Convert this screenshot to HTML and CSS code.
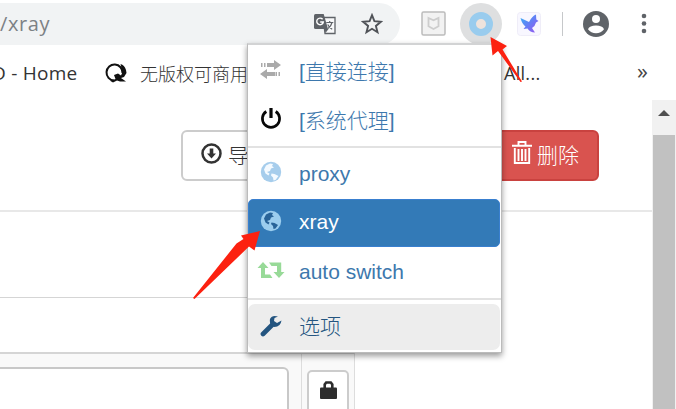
FILE: index.html
```html
<!DOCTYPE html>
<html lang="zh-CN">
<head>
<meta charset="utf-8">
<title>xray</title>
<link rel="stylesheet" href="styles.css">
</head>
<body>
<header class="toolbar">
  <div class="address">
    <span class="url">/xray</span>
    <svg class="translate" width="22" height="22" viewBox="0 0 22 22"><path d="M9 4.500h12v16H11z" fill="#f8f9fa" stroke="#5f6368" stroke-width="1.300"/><path d="M1.500 1h8.200l4.300 15H1.500Q0 16 0 14.500V2.500Q0 1 1.500 1z" fill="#5f6368"/><path d="M10.500 16h4l-3 4z" fill="#5f6368"/><path d="M8.600 6.300A3.300 3.300 0 1 0 9.300 9H6.200" fill="none" stroke="#fff" stroke-width="1.400"/><path d="M12.300 9.500h7M15.700 8v1.500M18 9.500q-1 4-4 6M13.700 11.500q1.500 3 4.500 4.700" fill="none" stroke="#5f6368" stroke-width="1.200"/></svg>
    <svg class="star" width="22" height="22" viewBox="0 0 22 22"><path d="M11 2.200l2.400 6 6.500.5-5 4.200 1.600 6.300-5.500-3.400-5.500 3.400 1.600-6.300-5-4.200 6.500-.5z" fill="none" stroke="#505358" stroke-width="1.900"/></svg>
  </div>
  <svg class="shield" width="25" height="25" viewBox="0 0 25 25"><rect x="1" y="1" width="23" height="23" rx="1.500" fill="#f2f2f2" stroke="#bcbcbc" stroke-width="1.500"/><path d="M7.500 7l5 2.300 5-2.300v8.200l-5 2.800-5-2.800z" fill="none" stroke="#cdcdcd" stroke-width="1.800"/></svg>
  <div class="omega"><span class="ring"></span></div>
  <svg class="bird" width="24" height="24" viewBox="0 0 24 24"><defs><linearGradient id="wing" x1="0" y1="0" x2="1" y2="1"><stop offset="0" stop-color="#35b5f5"/><stop offset=".5" stop-color="#667df5"/><stop offset="1" stop-color="#9a55ee"/></linearGradient></defs><rect x=".5" y=".5" width="23" height="23" rx="3" fill="#f8f7ff" stroke="#efedf8"/><path d="M3.500 6l8.500 4q3-6 7-7.500l.3 5 2.200 1.500-2.500 1.500q-1 4-4 5.500l3 4.500q-5 0-7.500-4l-4 .5 2-2.500Q5 12 3.500 6z" fill="url(#wing)"/></svg>
  <span class="separator"></span>
  <svg class="avatar" width="26" height="26" viewBox="0 0 26 26"><circle cx="13" cy="13" r="13" fill="#5f6368"/><circle cx="13" cy="8" r="4" fill="#fff"/><path d="M5 18.200q1.500-3.700 8-3.700t8 3.700q-3 4-8 4t-8-4z" fill="#fff"/></svg>
  <svg class="more" width="6" height="22" viewBox="0 0 6 22"><g fill="#5f6368"><circle cx="3" cy="3" r="2.300"/><circle cx="3" cy="10.500" r="2.300"/><circle cx="3" cy="18" r="2.300"/></g></svg>
</header>
<nav class="bookmarks">
  <span class="home">D - Home</span>
  <svg class="quark" width="24" height="22" viewBox="0 0 24 22"><path d="M10 18.500A8 8 0 1 1 18.500 11" fill="none" stroke="#111" stroke-width="2"/><path d="M16.500 2q4 1 5.500 6l.5 3-2.500 4-3 1 5 3.500h-6l-3-1-4 2-2.500-1.500 5-2-1.500-4 4-1.500 3 2 1.500-3.500z" fill="#111"/></svg>
  <span class="free">无版权可商用</span>
  <span class="all">All...</span>
  <span class="overflow">»</span>
</nav>
<div class="viewport">
  <main>
    <div class="actions">
      <button class="btn export"><svg width="21" height="21" viewBox="0 0 21 21"><circle cx="10.500" cy="10.500" r="9" fill="none" stroke="#333" stroke-width="2.500"/><path d="M8.700 5.500h3.600v5H15l-4.500 5-4.500-5h2.700z" fill="#333"/></svg><span>导出</span></button>
      <button class="btn danger"><svg width="20" height="23" viewBox="0 0 20 23"><path d="M6.500 4V1h7v3M0 4.700h20M2.800 7v15h14.400V7M6.500 8v12M10 8v12M13.500 8v12" fill="none" stroke="#fff" stroke-width="1.900"/></svg><span>删除</span></button>
    </div>
    <div class="intro"></div>
    <div class="rules">
      <div class="rules-head"></div>
      <div class="rules-row">
        <div class="cell wide"><div class="field"></div></div>
        <div class="cell narrow"><div class="lock"><svg width="17" height="18" viewBox="0 0 17 18"><path d="M4.700 8V3.500L6.200 1.500h4.600l1.500 2V8" fill="none" stroke="#2d2d2d" stroke-width="2.600"/><rect y="6.500" width="17" height="11.500" rx="1" fill="#2d2d2d"/></svg></div></div>
      </div>
    </div>
  </main>
  <aside class="scrollbar"><div class="up"></div><div class="thumb"></div></aside>
</div>
<div class="popup">
  <div class="item"><svg width="24" height="22" viewBox="0 0 24 22"><g fill="#aaa"><path d="M2 4h1.500v4H2zM5 4h1.500v4H5zM8 4h7V1l7 5-7 5V8H8zM21 13h-1.500v4H21zM18 13h-1.500v4H18zM16 13H8v-3l-7 5 7 5v-3h8z"/></g></svg><span>[直接连接]</span></div>
  <div class="item"><svg width="24" height="22" viewBox="0 0 24 22"><path d="M7.300 3.500a8.600 8.600 0 1 0 9.400 0" fill="none" stroke="#080808" stroke-width="2.700"/><path d="M12 0v10" stroke="#080808" stroke-width="3.200"/></svg><span>[系统代理]</span></div>
  <hr>
  <div class="item"><svg width="24" height="22" viewBox="0 0 24 22"><circle cx="12" cy="11" r="10.200" fill="#a6cdec"/><path d="M7 4.500l4-2 3 .5-1 2 2 1.500-3 1-1 2.500-3 1 2.500 1.500-1 2-3-2-1.500-4zM12.500 12.500l3 .5 4 2-3 4-2 .5-.5-3-2-2z" fill="#f4faff"/></svg><span>proxy</span></div>
  <div class="item active"><svg width="24" height="22" viewBox="0 0 24 22"><circle cx="12" cy="11" r="10.200" fill="#9bcdee"/><path d="M7 4.500l4-2 3 .5-1 2 2 1.500-3 1-1 2.500-3 1 2.500 1.500-1 2-3-2-1.500-4zM12.500 12.500l3 .5 3.500 2-2.500 3.500-2 .5-.5-3-2-2z" fill="#286398"/></svg><span>xray</span></div>
  <div class="item"><svg width="28" height="20" viewBox="0 0 28 20"><path d="M6 2l5.500 6H8v6.500h5l2.500 3.500H4V8H.5zM12 2.500h12.200V12h3.300L22 18l-5.500-6H20V6h-5.500z" fill="#98da98"/></svg><span>auto switch</span></div>
  <hr class="last">
  <div class="item options"><svg width="24" height="22" viewBox="0 0 24 22"><path d="M4 19l9.500-9.500" stroke="#245580" stroke-width="4.700" stroke-linecap="round"/><path d="M19 1.500q-6-2-8 2.500-1 7 4.500 8 6 0 7-6.500l-4.500 2.500-3-2 .5-3z" fill="#245580"/></svg><span>选项</span></div>
</div>
<svg class="arrows" width="676" height="409" viewBox="0 0 676 409"><g fill="#fc2110"><path d="M490.500 37L507 46l-4.500 3.500L522 81.500l-1.500.5-22.500-31-5.500 4.500z"/><path d="M260 231l-5.500 19.500-5.500-4L194.500 299l-1.500-1 43.500-54.500 7-4.500-2.500-3.500z"/></g></svg>
</body>
</html>
```
FILE: styles.css
```css
* { box-sizing: border-box; }
body {
  margin: 0;
  width: 676px;
  height: 409px;
  overflow: hidden;
  position: relative;
  background: #fff;
  color: #333;
  font-family: "Open Sans", "Noto Sans CJK SC", sans-serif;
}
svg { display: block; flex: none; }
.toolbar { display: flex; align-items: center; height: 48px; padding-bottom: 1px; }
.address {
  display: flex;
  align-items: center;
  width: 400px;
  height: 42px;
  background: #f1f3f4;
  border-radius: 0 21px 21px 0;
}
.url { width: 314px; color: #7c8185; font-size: 20px; line-height: 28px; letter-spacing: .6px; }
.star { margin-left: 25px; }
.shield { margin-left: 21px; }
.omega {
  display: flex;
  align-items: center;
  justify-content: center;
  width: 42px;
  height: 42px;
  margin-left: 14px;
  border-radius: 50%;
  background: #dedfe0;
}
.ring { width: 24px; height: 24px; border: 7px solid #99ccee; border-radius: 50%; background: #eee3dc; }
.bird { margin-left: 15px; }
.separator { width: 1px; height: 24px; margin-left: 21px; background: #c6c8ca; }
.avatar { margin-left: 20px; }
.more { margin-left: 32px; }
.bookmarks { display: flex; align-items: center; height: 50px; margin-bottom: 2px; font-size: 18px; white-space: nowrap; }
.home { width: 104px; margin-left: -8px; font-size: 19px; letter-spacing: .25px; }
.quark { margin-left: 8px; }
.free { width: 108px; margin-left: 12px; font-family: "Noto Sans CJK SC", sans-serif; font-weight: 300; }
.all { margin-left: 256px; width: 133px; letter-spacing: .3px; }
.overflow { font-size: 22px; line-height: 24px; margin-top: -7px; color: #444; }
.viewport { display: flex; height: 309px; }
main { width: 652px; }
.actions {
  display: flex;
  justify-content: space-between;
  height: 112px;
  padding: 30px 53px 0 181px;
  border-bottom: 2px solid #e8e8e8;
}
.btn {
  display: flex;
  align-items: center;
  height: 51px;
  padding: 0 17px 3px;
  border: 2px solid #ccc;
  border-radius: 6px;
  background: #fff;
  color: #333;
  font: 300 21px/30px "Noto Sans CJK SC", sans-serif;
}
.btn svg { margin: -1px 6px 0 1px; }
.btn.danger { width: 118px; background: #d9534f; border-color: #c9423f; color: #fff; }
.btn.danger svg { margin: -3px 5px 0 12px; }
.intro { height: 85px; }
.rules { width: 355px; border-top: 1px solid #d5d5d5; border-right: 1px solid #ddd; }
.rules-head { height: 56px; border-bottom: 2px solid #d5d5d5; }
.rules-row { display: flex; height: 56px; background: #f9f9f9; }
.cell.wide { width: 302px; padding: 13px 12px 0 0; border-right: 1px solid #ddd; }
.field { height: 50px; border: 2px solid #c8c8c8; border-left: 0; border-radius: 0 6px 0 0; background: #fff; }
.cell.narrow { padding: 16px 5px 0; }
.lock {
  display: flex;
  justify-content: center;
  width: 42px;
  height: 50px;
  padding-top: 9px;
  border: 2px solid #ccc;
  border-radius: 5px;
  background: #fff;
}
.scrollbar { width: 24px; background: #f1f1f1; }
.up {
  width: 12px;
  height: 6px;
  margin: 10px 0 19px 6px;
  background: #505050;
  clip-path: polygon(50% 0, 100% 100%, 0 100%);
}
.thumb { width: 22px; height: 274px; margin-left: 1px; background: #c1c1c1; }
.popup {
  position: absolute;
  left: 247px;
  top: 43px;
  width: 255px;
  height: 310px;
  padding-top: 3px;
  background: #fff;
  border: 1px solid #bbb;
  border-top: 2px solid #d2d3d4;
  box-shadow: 0 3px 6px rgba(0, 0, 0, .4);
  font-family: "Liberation Sans", "Noto Sans CJK SC", sans-serif;
  font-size: 21px;
  font-weight: 300;
}
.item {
  display: flex;
  align-items: center;
  height: 49px;
  padding: 0 0 2px 11px;
  color: #3d78ad;
  line-height: 30px;
  white-space: nowrap;
}
.item svg { width: 24px; margin-right: 16px; margin-top: -3px; }
.item:nth-child(6) { padding-bottom: 0; }
.item:nth-child(6) svg { width: 28px; margin-left: -2px; margin-right: 14px; }
.item.active { width: 252px; height: 48px; background: #337ab7; border: 1px solid #397fcf; border-radius: 5px; color: #fff; padding-left: 10px; }
hr { height: 2px; margin: 0 0 2px; border: 0; background: #e2e2e2; }
hr.last { margin: 2px 0 4px; }
.item.options { width: 252px; height: 46px; padding-bottom: 0; border-radius: 7px; background: #ededed; color: #245580; }
.arrows { position: absolute; left: 0; top: 0; pointer-events: none; }
```
